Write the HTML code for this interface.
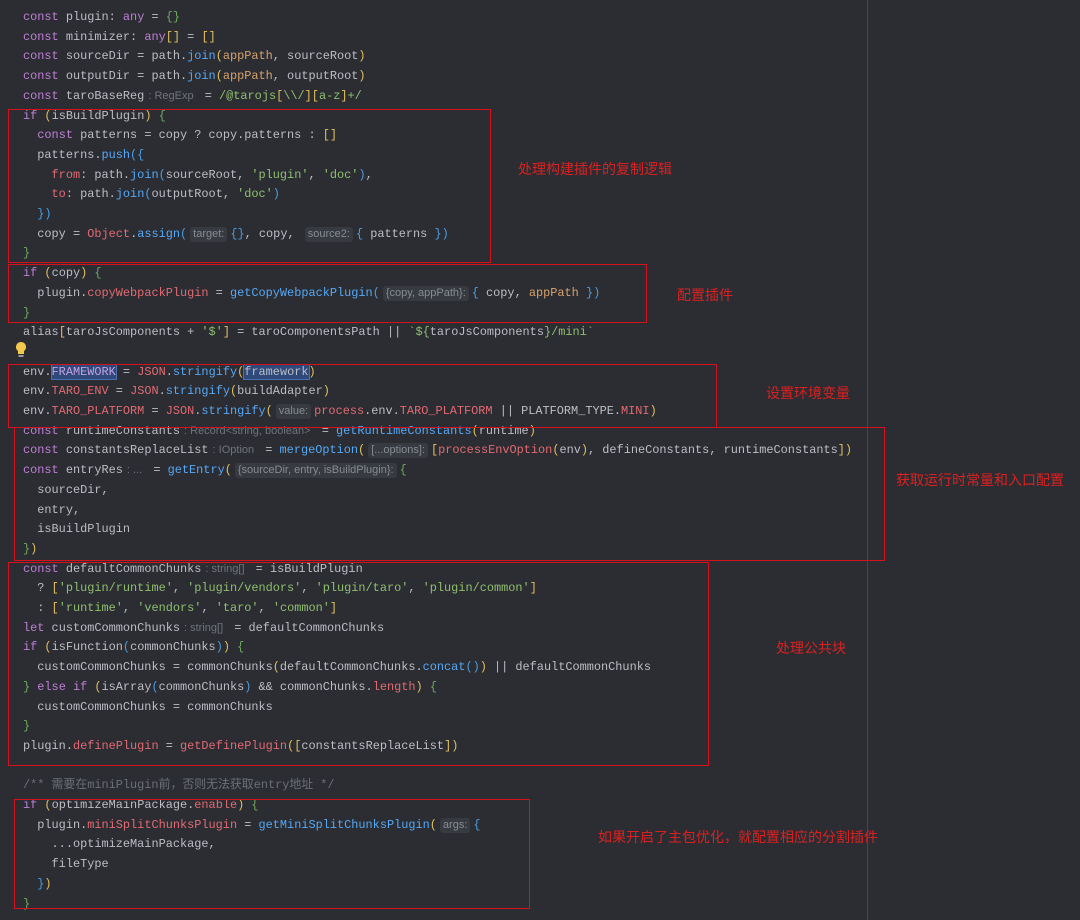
<!DOCTYPE html>
<html><head><meta charset="utf-8"><style>
body{margin:0;width:1080px;height:920px;background:#2b2d33;overflow:hidden;position:relative;font-family:"Liberation Mono",monospace;}
.l{position:absolute;left:23px;height:20px;line-height:20px;font-size:11.9px;color:#bcbec4;white-space:pre;}
.k{color:#c07fd6}.f{color:#56a8f5}.s{color:#8fbf6e}.y{color:#e2c05c}.p{color:#e36a72}.g{color:#6faa5c}.b{color:#4d9de0}.o{color:#d6a26b}
.h{display:inline-block;font-family:"Liberation Sans",sans-serif;font-size:11px;color:#878b93;background:#373a41;border-radius:3px;padding:0 3px;line-height:15px;margin:0 3px}
.hh{font-family:"Liberation Sans",sans-serif;font-size:11px;color:#6f737b;margin:0 4px}
.c{color:#6b6f77}
.box{position:absolute;border:1.5px solid #d4121e;}
.lab{position:absolute;color:#dc2020;font-family:"Liberation Sans","Noto Sans CJK SC",sans-serif;font-size:14px;}
.vl{position:absolute;left:867px;top:0;width:1px;height:920px;background:#44474e}
.sel{background:#2f4a7a;outline:1px solid #4a6fb0}
</style></head><body>
<div class="vl"></div>
<div class="l" style="top:7px"><span class="k">const</span> plugin: <span class="k">any</span> = <span class="g">{}</span></div>
<div class="l" style="top:26.7px"><span class="k">const</span> minimizer: <span class="k">any</span><span class="y">[]</span> = <span class="y">[]</span></div>
<div class="l" style="top:46.4px"><span class="k">const</span> sourceDir = path.<span class="f">join</span><span class="y">(</span><span class="o">appPath</span>, sourceRoot<span class="y">)</span></div>
<div class="l" style="top:66.1px"><span class="k">const</span> outputDir = path.<span class="f">join</span><span class="y">(</span><span class="o">appPath</span>, outputRoot<span class="y">)</span></div>
<div class="l" style="top:85.8px"><span class="k">const</span> taroBaseReg<span class="hh">: RegExp</span> = <span class="s">/@tarojs</span><span class="y">[</span><span class="s">\\/</span><span class="y">][</span><span class="s">a-z</span><span class="y">]</span><span class="s">+/</span></div>
<div class="l" style="top:105.5px"><span class="k">if</span> <span class="y">(</span>isBuildPlugin<span class="y">)</span> <span class="g">{</span></div>
<div class="l" style="top:125.2px">  <span class="k">const</span> patterns = copy ? copy.patterns : <span class="y">[]</span></div>
<div class="l" style="top:144.9px">  patterns.<span class="f">push</span><span class="b">({</span></div>
<div class="l" style="top:164.6px">    <span class="p">from</span>: path.<span class="f">join</span><span class="b">(</span>sourceRoot, <span class="s">'plugin'</span>, <span class="s">'doc'</span><span class="b">)</span>,</div>
<div class="l" style="top:184.3px">    <span class="p">to</span>: path.<span class="f">join</span><span class="b">(</span>outputRoot, <span class="s">'doc'</span><span class="b">)</span></div>
<div class="l" style="top:204px">  <span class="b">})</span></div>
<div class="l" style="top:223.7px">  copy = <span class="p">Object</span>.<span class="f">assign</span><span class="b">(</span><span class="h">target:</span><span class="b">{}</span>, copy, <span class="h">source2:</span><span class="b">{</span> patterns <span class="b">})</span></div>
<div class="l" style="top:243.4px"><span class="g">}</span></div>
<div class="l" style="top:263.1px"><span class="k">if</span> <span class="y">(</span>copy<span class="y">)</span> <span class="g">{</span></div>
<div class="l" style="top:282.8px">  plugin.<span class="p">copyWebpackPlugin</span> = <span class="f">getCopyWebpackPlugin</span><span class="b">(</span><span class="h">{copy, appPath}:</span><span class="b">{</span> copy, <span class="o">appPath</span> <span class="b">})</span></div>
<div class="l" style="top:302.5px"><span class="g">}</span></div>
<div class="l" style="top:322.2px">alias<span class="y">[</span>taroJsComponents + <span class="s">'$'</span><span class="y">]</span> = taroComponentsPath || <span class="s">`${</span>taroJsComponents<span class="s">}/mini`</span></div>
<svg style="position:absolute;left:15px;top:341px" width="12" height="17" viewBox="0 0 12 17"><path d="M6 1a5 5 0 0 0-3 9v3h6v-3a5 5 0 0 0-3-9z" fill="#f2c94c"/><rect x="3.5" y="14" width="5" height="2" fill="#9a9a9a"/></svg>
<div class="l" style="top:361.6px">env.<span class="sel p" style="color:#c7a0e0">FRAMEWORK</span> = <span class="p">JSON</span>.<span class="f">stringify</span><span class="y">(</span><span class="sel">framework</span><span class="y">)</span></div>
<div class="l" style="top:381.3px">env.<span class="p">TARO_ENV</span> = <span class="p">JSON</span>.<span class="f">stringify</span><span class="y">(</span>buildAdapter<span class="y">)</span></div>
<div class="l" style="top:401px">env.<span class="p">TARO_PLATFORM</span> = <span class="p">JSON</span>.<span class="f">stringify</span><span class="y">(</span><span class="h">value:</span><span class="p">process</span>.env.<span class="p">TARO_PLATFORM</span> || PLATFORM_TYPE.<span class="p">MINI</span><span class="y">)</span></div>
<div class="l" style="top:420.7px"><span class="k">const</span> runtimeConstants<span class="hh">: Record&lt;string, boolean&gt;</span> = <span class="f">getRuntimeConstants</span><span class="y">(</span>runtime<span class="y">)</span></div>
<div class="l" style="top:440.4px"><span class="k">const</span> constantsReplaceList<span class="hh">: IOption</span> = <span class="f">mergeOption</span><span class="y">(</span><span class="h">[...options]:</span><span class="y">[</span><span class="p">processEnvOption</span><span class="y">(</span>env<span class="y">)</span>, defineConstants, runtimeConstants<span class="y">])</span></div>
<div class="l" style="top:460.1px"><span class="k">const</span> entryRes<span class="hh">: ...</span> = <span class="f">getEntry</span><span class="y">(</span><span class="h">{sourceDir, entry, isBuildPlugin}:</span><span class="g">{</span></div>
<div class="l" style="top:479.8px">  sourceDir,</div>
<div class="l" style="top:499.5px">  entry,</div>
<div class="l" style="top:519.2px">  isBuildPlugin</div>
<div class="l" style="top:538.9px"><span class="g">}</span><span class="y">)</span></div>
<div class="l" style="top:558.6px"><span class="k">const</span> defaultCommonChunks<span class="hh">: string[]</span> = isBuildPlugin</div>
<div class="l" style="top:578.3px">  ? <span class="y">[</span><span class="s">'plugin/runtime'</span>, <span class="s">'plugin/vendors'</span>, <span class="s">'plugin/taro'</span>, <span class="s">'plugin/common'</span><span class="y">]</span></div>
<div class="l" style="top:598px">  : <span class="y">[</span><span class="s">'runtime'</span>, <span class="s">'vendors'</span>, <span class="s">'taro'</span>, <span class="s">'common'</span><span class="y">]</span></div>
<div class="l" style="top:617.7px"><span class="k">let</span> customCommonChunks<span class="hh">: string[]</span> = defaultCommonChunks</div>
<div class="l" style="top:637.4px"><span class="k">if</span> <span class="y">(</span>isFunction<span class="b">(</span>commonChunks<span class="b">)</span><span class="y">)</span> <span class="g">{</span></div>
<div class="l" style="top:657.1px">  customCommonChunks = commonChunks<span class="y">(</span>defaultCommonChunks.<span class="f">concat</span><span class="b">()</span><span class="y">)</span> || defaultCommonChunks</div>
<div class="l" style="top:676.8px"><span class="g">}</span> <span class="k">else if</span> <span class="y">(</span>isArray<span class="b">(</span>commonChunks<span class="b">)</span> &amp;&amp; commonChunks.<span class="p">length</span><span class="y">)</span> <span class="g">{</span></div>
<div class="l" style="top:696.5px">  customCommonChunks = commonChunks</div>
<div class="l" style="top:716.2px"><span class="g">}</span></div>
<div class="l" style="top:735.9px">plugin.<span class="p">definePlugin</span> = <span class="p">getDefinePlugin</span><span class="y">([</span>constantsReplaceList<span class="y">])</span></div>
<div class="l c" style="top:775.3px;font-family:'Liberation Mono','Noto Sans CJK SC',monospace">/** 需要在miniPlugin前，否则无法获取entry地址 */</div>
<div class="l" style="top:795px"><span class="k">if</span> <span class="y">(</span>optimizeMainPackage.<span class="p">enable</span><span class="y">)</span> <span class="g">{</span></div>
<div class="l" style="top:814.7px">  plugin.<span class="p">miniSplitChunksPlugin</span> = <span class="f">getMiniSplitChunksPlugin</span><span class="y">(</span><span class="h">args:</span><span class="b">{</span></div>
<div class="l" style="top:834.4px">    ...optimizeMainPackage,</div>
<div class="l" style="top:854.1px">    fileType</div>
<div class="l" style="top:873.8px">  <span class="b">}</span><span class="y">)</span></div>
<div class="l" style="top:893.5px"><span class="g">}</span></div>

<div class="box" style="left:8px;top:109px;width:481px;height:152px"></div>
<div class="box" style="left:8px;top:264px;width:637px;height:57px"></div>
<div class="box" style="left:8px;top:364px;width:707px;height:62px"></div>
<div class="box" style="left:14px;top:427px;width:869px;height:132px"></div>
<div class="box" style="left:8px;top:562px;width:699px;height:202px"></div>
<div class="box" style="left:14px;top:799px;width:514px;height:108px"></div>

<div class="lab" style="left:518px;top:159px">处理构建插件的复制逻辑</div>
<div class="lab" style="left:677px;top:285px">配置插件</div>
<div class="lab" style="left:766px;top:383px">设置环境变量</div>
<div class="lab" style="left:896px;top:470px">获取运行时常量和入口配置</div>
<div class="lab" style="left:776px;top:638px">处理公共块</div>
<div class="lab" style="left:598px;top:827px">如果开启了主包优化，就配置相应的分割插件</div>
</body></html>
